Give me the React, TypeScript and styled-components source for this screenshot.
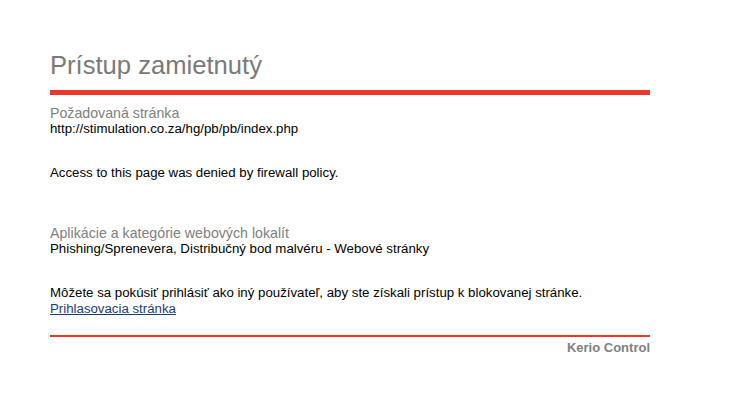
import React from "react";
import styled, { createGlobalStyle } from "styled-components";

const Global = createGlobalStyle`
  html, body { margin: 0; padding: 0; background: #fff; }
  body { font-family: "Liberation Sans", Arial, sans-serif; }
`;

const Page = styled.div`
  width: 600px;
  margin: 0 0 0 50px;
  padding-top: 48px;
`;

const Title = styled.h1`
  margin: 0;
  font-size: 25.6px;
  font-weight: normal;
  color: #7a7a7a;
  line-height: 34px;
  padding-bottom: 8px;
  border-bottom: 5px solid #e8392a;
`;

const Section = styled.div<{ $gap: number }>`
  margin-top: ${(p) => p.$gap}px;
`;

const Label = styled.div`
  font-size: 14.2px;
  color: #808080;
  line-height: 16px;
`;

const Value = styled.div`
  font-size: 13.25px;
  color: #000;
  line-height: 16px;
`;

const Link = styled.a`
  font-size: 13.25px;
  color: #1a3c7c;
  text-decoration: underline;
  line-height: 16px;
`;

const Footer = styled.div`
  margin-top: 18px;
  border-top: 2px solid #e8392a;
  padding-top: 3px;
  text-align: right;
  font-size: 13px;
  font-weight: bold;
  color: #808080;
  line-height: 16px;
`;

export default function App() {
  return (
    <>
      <Global />
      <Page>
        <Title>Prístup zamietnutý</Title>
        <Section $gap={10}>
          <Label>Požadovaná stránka</Label>
          <Value>http://stimulation.co.za/hg/pb/pb/index.php</Value>
        </Section>
        <Section $gap={28}>
          <Value>Access to this page was denied by firewall policy.</Value>
        </Section>
        <Section $gap={44}>
          <Label>Aplikácie a kategórie webových lokalít</Label>
          <Value>Phishing/Sprenevera, Distribučný bod malvéru - Webové stránky</Value>
        </Section>
        <Section $gap={28}>
          <Value>Môžete sa pokúsiť prihlásiť ako iný používateľ, aby ste získali prístup k blokovanej stránke.</Value>
          <Value>
            <Link href="#">Prihlasovacia stránka</Link>
          </Value>
        </Section>
        <Footer>Kerio Control</Footer>
      </Page>
    </>
  );
}
